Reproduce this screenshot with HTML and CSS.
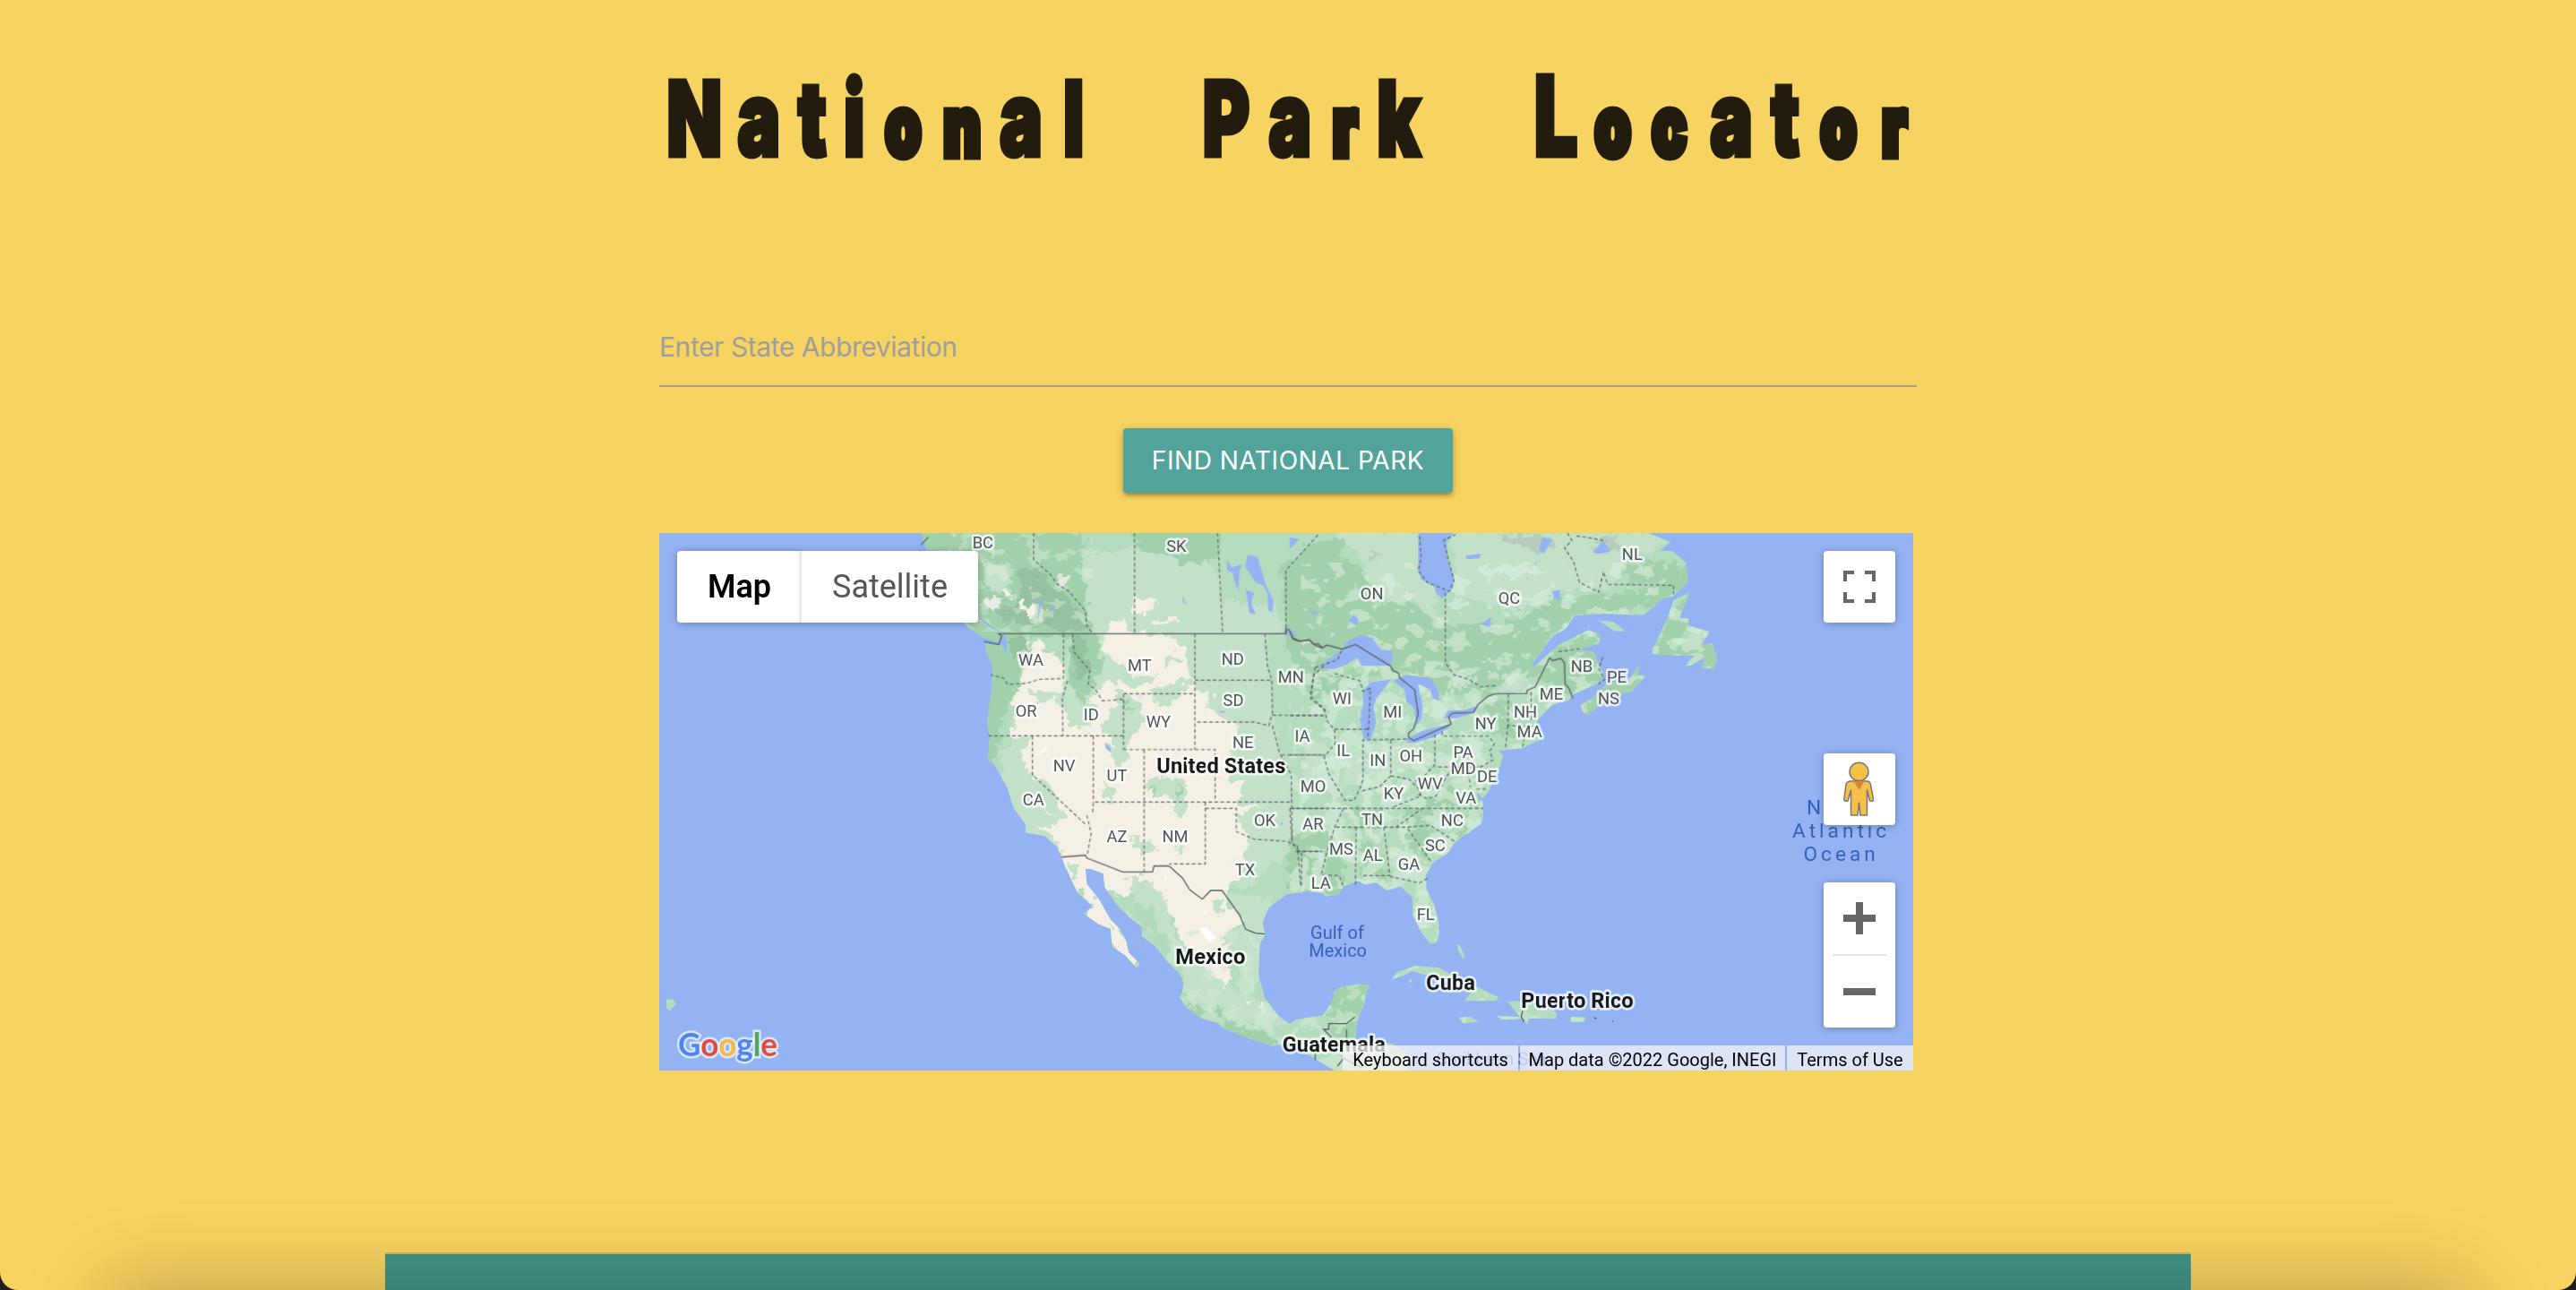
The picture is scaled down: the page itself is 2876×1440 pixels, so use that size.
FILE: index.html
```html
<!DOCTYPE html>
<html lang="en">
<head>
<meta charset="utf-8">
<title>National Park Locator</title>
<link rel="stylesheet" href="styles.css">
</head>
<body>
<main class="page">
  <h1 class="title">
    <svg class="title-art" viewBox="0 0 2005.7 120" preserveAspectRatio="none">
      <text y="114" x="56 159 244 311 389 483 577 661">Nati<tspan class="low">on</tspan>al</text>
      <text y="114" x="904 1006 1094 1179">Pa<tspan class="low">r</tspan>k</text>
      <text y="114" x="1430 1521 1611 1710 1796 1881 1970"><tspan class="tall">L</tspan><tspan class="low">oc</tspan>at<tspan class="low">or</tspan></text>
    </svg>
  </h1>
  <form class="search">
    <input class="state-input" type="text" placeholder="Enter State Abbreviation">
    <button class="find" type="button">FIND NATIONAL PARK</button>
  </form>
  <section class="map">
    <svg class="canvas" viewBox="0 0 4200 1800">
      <defs>
        <filter id="jag" x="-5%" y="-5%" width="110%" height="110%">
          <feTurbulence type="fractalNoise" baseFrequency="0.03" numOctaves="3" seed="4"/>
          <feDisplacementMap in="SourceGraphic" scale="60" xChannelSelector="R" yChannelSelector="G"/>
        </filter>
        <filter id="blotLight" x="0" y="0" width="100%" height="100%">
          <feTurbulence type="fractalNoise" baseFrequency="0.017 0.02" numOctaves="4" seed="11"/>
          <feColorMatrix values="0 0 0 0 .765  0 0 0 0 .882  0 0 0 0 .79  22 0 0 0 -12.6"/>
        </filter>
        <filter id="blotDark" x="0" y="0" width="100%" height="100%">
          <feTurbulence type="fractalNoise" baseFrequency="0.017 0.015" numOctaves="4" seed="23"/>
          <feColorMatrix values="0 0 0 0 .63  0 0 0 0 .82  0 0 0 0 .67  22 0 0 0 -12"/>
        </filter>
        <clipPath id="land">
          <path transform="translate(1032 -15)" d="M-155 15 L-135 71 -40 200 -10 260 40 295 100 340 130 360 135 430 118 392 60 385 65 420 85 460 82 540 65 650 75 690 70 775 90 790 135 870 155 935 195 990 200 1018 260 1030 300 1065 316 1100 330 1140 1250 1140 1250 15Z"/>
          <path transform="translate(1032 -15)" d="M-200 90 L0 330 55 365 105 380 118 355 60 320 -60 200Z"/>
          <path transform="translate(1272 915)" d="M-45 88 L20 100 60 130 76 172 110 250 130 290 180 335 150 360 200 395 240 410 245 470 290 500 328 542 338 528 300 490 290 445 270 410 240 380 200 310 160 260 155 203 215 225 220 270 260 330 300 370 345 405 345 435 390 470 430 520 470 560 485 590 480 620 470 640 495 675 545 710 600 725 620 745 710 780 780 803 830 795 900 830 930 850 1000 890 1240 890 1230 820 1180 795 1060 780 1065 720 1090 660 1095 625 1110 600 1070 595 1010 605 988 620 985 650 950 700 860 715 840 730 800 700 755 640 735 560 740 460 757 430 748 390 770 340 830 295 900 285 950 290 960 302 1005 295 1020 268 1070 250 1090 262 1130 255 1165 283 1210 268 1250 305 1252 365 1282 425 1310 460 1330 458 1340 430 1340 390 1320 320 1298 280 1295 230 1320 190 1370 155 1395 120 1440 85 1480 60 1488 35 1485 -20 -45 -20Z"/>
          <path transform="translate(2112 -15)" d="M-20 15 L1200 15 1275 45 1240 75 1280 75 1328 115 1333 180 1285 225 1250 235 1185 290 1050 285 955 292 925 335 880 360 810 455 820 462 900 390 1000 340 1040 355 1035 385 970 405 1020 415 1040 470 1055 490 1030 520 950 555 935 575 880 590 840 630 825 650 845 690 845 705 780 735 700 745 715 760 700 810 665 880 645 905 625 875 640 930 648 960 600 1020 500 1060 -20 1060Z"/>
          <path transform="translate(2112 -15)" d="M975 590 L1010 570 1060 520 1100 510 1140 500 1170 455 1165 490 1190 495 1145 545 1080 560 995 625 978 610ZM1335 215 L1285 240 1265 300 1215 405 1215 420 1300 425 1355 425 1325 460 1345 458 1390 430 1380 465 1420 470 1432 435 1415 385 1380 390 1405 345 1335 325 1335 300 1305 300 1338 217ZM1035 308 L1085 312 1125 345 1085 343Z"/>
          <path transform="translate(2292 915)" d="M162 580 L180 555 240 535 320 540 380 575 450 605 480 620 520 640 510 652 405 652 425 625 360 590 290 570 230 552 200 567ZM550 655 L580 652 640 662 715 690 712 712 620 710 615 730 595 712 530 715 515 703 590 705ZM385 707 L425 705 452 722 400 727ZM762 705 L813 707 805 722 760 722ZM380 463 L388 465 405 498 402 513 385 485ZM218 588 L225 580 232 590Z"/>
          <path d="M24 1562 L46 1561 57 1578 35 1600 24 1590Z"/>
        </clipPath>
      </defs>
      <rect width="4200" height="1800" fill="#94b3f3"/>
      <g clip-path="url(#land)">
        <rect width="4200" height="1800" fill="#b5dcbe"/>
        <g filter="url(#jag)">
          <g transform="translate(1032 -15)">
            <path fill="#c3e1c9" d="M380 90 L560 60 680 90 820 110 850 240 1040 260 1050 350 1000 360 1010 500 1030 650 1090 900 1100 1060 950 1200 880 1200 0 1200 140 700 410 330Z"/>
            <path fill="#a1d1ab" d="M-220 0 L370 0 400 50 380 150 415 340 440 380 450 470 420 520 340 520 350 360 190 355 170 440 180 520 120 640 90 790 60 780 50 380 -60 250ZM520 0 L840 0 850 90 760 120 600 80ZM1120 60 L1260 20 1260 560 1160 560 1080 440 1060 360ZM1100 1030 L1260 1000 1260 1230 1120 1230Z"/>
            <path fill="#94c19e" d="M160 140 L240 120 270 180 340 230 400 340 290 340 220 330 120 310 60 260 160 260 180 200ZM130 380 L200 370 210 410 160 430ZM340 370 L390 360 410 480 370 500Z"/>
            <path fill="#f5f0e5" d="M205 440 L235 365 260 420 320 430 320 510 340 560 400 590 460 510 500 480 450 390 480 320 520 290 540 350 680 355 740 430 750 500 770 540 830 550 790 600 870 640 910 660 900 720 870 830 940 860 900 920 980 930 900 960 950 1060 890 1110 870 1220 350 1220 300 1040 240 1000 290 990 220 900 150 700 160 560ZM555 225 L640 240 590 290 560 290ZM610 310 L700 305 690 325 620 325Z"/>
            <path fill="#c3e1c9" d="M500 540 L570 570 600 640 540 720 530 780 490 830 480 710 450 660 500 600ZM620 540 L680 520 740 490 750 510 700 570 640 600ZM220 700 L180 760 210 830 260 840 330 960 290 990 240 900 140 850 100 760 150 700ZM600 850 L660 820 690 850 700 810 740 880 720 970 690 950 680 890 620 910ZM450 850 L500 870 470 920ZM540 1030 L630 1060 630 1100 580 1080ZM470 430 L580 500 640 490 560 540 480 510ZM680 410 L720 440 650 460ZM200 540 L300 550 240 590ZM700 1060 L720 1060 710 1090ZM280 560 L340 540 430 600 400 680 340 640Z"/>
            <path fill="#a1d1ab" d="M600 860 L630 880 620 910ZM690 850 L720 880 710 900ZM500 560 L540 580 550 620ZM350 520 L380 500 420 530 380 590Z"/>
            <path fill="#c3e1c9" d="M50 110 L120 130 160 190 110 210 50 190ZM380 95 L400 70 395 140ZM200 250 L270 270 240 320 210 300ZM60 60 L110 80 90 110Z"/>
            <path fill="#e7e5e1" d="M60 235 L120 240 100 275ZM295 165 L340 165 325 200ZM195 370 L215 360 205 410ZM565 540 L585 550 575 580Z"/>
            <path fill="#f5f0e5" d="M170 255 L225 255 215 300ZM120 200 L150 210 140 240Z"/>
          </g>
          <g transform="translate(1272 915)">
            <path fill="#f5f0e5" d="M80 170 L150 165 280 220 430 200 620 220 680 150 690 200 640 270 630 330 720 380 660 400 620 450 640 500 640 610 570 570 540 510 480 460 450 370 400 290 300 230 220 240 300 370 350 430 200 230 150 210 180 290 250 370 340 540 280 510 230 430 150 380 180 330 120 270Z"/>
            <path fill="#c3e1c9" d="M300 240 L360 240 430 320 440 390 470 460 560 540 640 610 740 650 840 720 700 770 480 660 470 580 400 470 320 380ZM580 310 L620 310 620 370 590 360ZM90 190 L130 210 120 240ZM230 390 L250 400 240 410ZM640 300 L780 300 760 480 730 620 640 500 620 450 690 400Z"/>
            <path fill="#b2dbbb" d="M320 320 L370 340 410 420 380 420 320 370ZM350 400 L430 440 480 520 480 590 410 490Z"/>
            <path fill="#a1d1ab" d="M470 620 L500 640 530 690 600 680 640 720 760 760 820 790 760 810 600 750 480 690ZM990 620 L1110 590 1060 780 1050 830 970 740ZM830 210 L900 150 940 190 1000 200 1000 260 840 260Z"/>
            <path fill="#f5f0e5" d="M735 660 L760 665 750 690ZM690 650 L715 650 700 665Z"/>
          </g>
          <g transform="translate(2112 -15)">
            <path fill="#a1d1ab" d="M-40 130 L80 60 180 100 260 170 270 250 400 250 520 330 700 320 880 240 1000 230 1240 200 1350 100 1350 200 1200 270 940 300 860 380 900 400 1040 340 1050 500 930 560 800 480 660 550 520 560 420 480 340 480 250 400 0 380ZM1100 130 L1300 100 1330 200 1140 180ZM660 580 L730 570 760 700 690 690ZM360 970 L500 880 600 840 560 920 440 1000ZM640 900 L660 960 560 1040 600 950ZM0 1020 L120 1040 100 1180 0 1200ZM230 1040 L310 1080 330 1180 240 1180ZM180 480 L330 480 330 500 220 510ZM400 1000 L480 1000 470 1120 380 1060ZM210 940 L330 940 300 1000 220 1000ZM970 620 L1060 510 1200 440 1200 560 1000 640ZM1200 420 L1340 200 1340 330 1280 380 1440 380 1440 480 1300 440Z"/>
            <path fill="#c3e1c9" d="M140 10 L440 10 430 150 500 230 480 320 420 240 330 250 260 170 240 90ZM540 10 L1220 10 1270 50 1140 110 1080 190 1000 200 860 210 780 280 690 260 560 220ZM40 700 L140 720 150 870 60 880ZM160 720 L240 720 240 860 180 870ZM260 720 L420 720 470 790 330 830 260 860ZM130 1000 L210 1000 150 1100ZM340 1080 L430 1110 450 1160 350 1160ZM1260 380 L1360 360 1380 410 1290 410ZM450 580 L600 570 560 610 470 640ZM720 490 L800 480 780 545 700 545Z"/>
            <path fill="#b5cdbd" d="M270 60 L300 80 280 110ZM690 30 L850 15 900 60 820 80ZM1000 60 L1090 20 1100 70 1030 90ZM790 120 L850 110 820 140Z"/>
          </g>
        </g>
        <rect x="2150" y="100" width="1400" height="1230" filter="url(#blotLight)" opacity=".5"/>
        <rect x="2110" y="430" width="700" height="860" filter="url(#blotDark)" opacity=".7"/>
        <rect x="1700" y="1330" width="1400" height="470" filter="url(#blotDark)" opacity=".6"/>
        <rect x="830" y="0" width="620" height="330" filter="url(#blotLight)" opacity=".4"/>
      </g>
      <!-- inland water -->
      <g fill="#94b3f3" transform="translate(2112 -15)">
        <path d="M185 385 L230 357 275 365 305 405 345 410 340 460 240 460 225 432 190 455 150 470 95 468 140 430 180 405ZM245 545 L270 515 340 505 320 530 290 570 280 600 290 650 270 705 248 705 235 640 245 590ZM345 510 L390 490 470 500 500 545 500 575 480 570 470 540 430 520 445 600 440 640 425 660 415 600 390 580 385 540ZM390 705 L450 675 540 655 530 670 480 700 420 718 395 718ZM515 635 L530 610 580 608 625 597 620 615 560 635ZM430 15 L550 15 525 45 530 110 550 160 545 200 510 235 490 215 480 190 440 170 430 130ZM195 310 L215 288 230 305 225 325ZM590 90 L640 85 635 100 592 103ZM845 30 L880 35 850 85 835 70ZM1015 80 L1050 40 1075 75 1040 85ZM880 210 L905 205 905 240 885 235ZM640 320 L675 295 670 330ZM0 30 L30 35 0 70ZM60 275 L100 280 80 290Z"/>
      </g>
      <g fill="#94b3f3" transform="translate(1032 -15)">
        <path d="M940 88 L972 95 1000 190 1025 240 1022 280 1008 275 1005 215 990 190 965 180 930 125ZM870 105 L885 130 920 120 912 140 908 208 895 180 888 148 870 140ZM932 205 L960 215 950 250 965 285 945 285ZM720 225 L735 258 722 245ZM460 715 L480 735 482 750 465 738ZM1065 355 L1075 330 1105 360 1080 358ZM840 612 L870 610 850 618ZM1080 45 L1110 32 1095 52ZM285 255 L293 262 290 295ZM240 240 L250 240 235 315ZM1050 980 L1058 985 1052 998Z"/>
      </g>
      <g fill="#ffffff" transform="translate(1032 -15)"><path d="M228 765 L270 722 262 742ZM803 625 L817 612 812 622ZM658 1150 L670 1175 663 1175ZM790 1290 L800 1275 802 1290ZM775 1340 L800 1335 835 1370 810 1385Z"/><path fill="#e9ebea" d="M52 240 L66 230 75 243 85 235 96 243 115 246 104 256 108 268 92 266 88 278 76 266 60 258Z"/></g>
      <!-- borders -->
      <g class="state-lines">
        <g transform="translate(1032 -15)">
          <path d="M222 15 V105 L275 150 300 185 340 210 395 275 400 325 420 352M560 15 V352M838 15 L855 352M1067 352 V140 L1180 15M322 352 V502 L240 505 200 518 135 522 120 500 78 490M352 352 L358 415 410 475 405 520 430 540 452 577 523 572M335 510 L318 570 320 694M70 694 H523M523 553 V740M523 553 H762M762 352 V740M523 740 H830 V916M218 694 V825 L395 990M422 694 V916M400 960 L415 1020 402 1090M420 950 L422 916 H1085M592 740 V1150M797 916 V1123 H676M797 937 H901 V1015 L960 1040 1070 1047 1100 1060M762 508 H1015M997 352 L1005 460 1020 510 1022 625M770 648 H960 L1010 660 1020 625 1200 626M1022 660 L1045 750 1085 825 1088 1045M1052 758 H1200M1085 937 H1200M1100 1081 H1190M1105 1060 L1117 1200M1195 460 L1160 490 1150 570 1200 610"/>
        </g>
        <g transform="translate(2112 -15)">
          <path d="M435 25 L440 100 430 140 460 180 535 210 550 175 530 100 515 40 555 20M521 215 V450 L550 490 600 505 640 530 695 525M930 15 L945 40 920 65 950 110 970 180 1035 213 1050 145 1065 187 1285 190 V220M960 25 L1000 30 1060 42M900 412 L970 403M1048 430 L1035 470 1055 505 1035 520M85 465 L68 560 115 605 125 645 150 675 152 720 115 765 130 820 160 870 185 910 215 910 235 870 245 840 V708 L395 705M85 465 L160 440 175 405M150 485 L235 510 245 545 270 535 262 700M0 626 H118M150 672 H262M0 758 H115M338 708 V828 L300 865 235 880M338 828 L400 840 430 870 440 895 340 935M486 690 V790 L440 840 420 845M510 680 V695 H665 L685 720 670 745 680 775 640 798 H486M430 890 L460 905 490 895 525 830 550 800M0 937 H648M0 937 L8 1055 40 1090 38 1200M155 1000 H400 L470 993 555 1050M180 937 L150 1000 125 1080 105 1160 165 1162 180 1200M222 1000 L220 1200M315 1000 L335 1162 H245M335 1165 L435 1187 460 1172M395 1005 L475 1118M355 1000 L440 940M732 555 L730 660 820 662M808 548 V640M730 660 L722 740M785 700 L780 735M625 872 H665M25 1081 H105M595 800 L605 865"/>
        </g>
      </g>
      <g class="country-lines">
        <path transform="translate(1032 -15)" d="M-155 55 L-130 28M55 378 L105 388 115 360 105 352 H1067 V335 L1078 340 1090 365 1115 377 1145 372 1160 388 1175 385 1190 400M316 1100 L395 1094 400 1103 520 1150 H620 L625 1130 H676"/>
        <path transform="translate(2112 -15)" d="M0 345 L10 370 30 377 65 373 85 390 108 400 125 390 175 404 220 388 337 460 345 475 365 485 368 500 418 540 430 620 415 670 398 685 398 700 415 710 540 655 532 630 545 618 615 616 630 590 665 560 690 553 793 552 795 542 822 530 870 433 880 442 908 435 920 450 922 520 935 535 948 568"/>
        <path transform="translate(1272 915)" d="M436 200 L480 240 505 280 547 311 575 282 H613 L672 365 692 412 725 425 757 428M1058 706 L1030 728 H970 V747 H953 L980 775M1030 748 V780M925 825 V850M1000 870 L1020 845 1080 875"/>
        <path transform="translate(2292 915)" d="M600 685 L595 705 605 722M840 707 L847 712M900 719 h4"/>
      </g>
      <g class="states">
        <text x="1084" y="50">BC</text><text x="1732" y="63">SK</text>
        <text x="1245" y="445">WA</text><text x="1609" y="463">MT</text><text x="1921" y="440">ND</text><text x="2116" y="500">MN</text>
        <text x="1229" y="616">OR</text><text x="1447" y="627">ID</text><text x="1672" y="652">WY</text><text x="1923" y="580">SD</text>
        <text x="1955" y="721">NE</text><text x="2154" y="700">IA</text><text x="1356" y="799">NV</text><text x="1533" y="830">UT</text>
        <text x="1253" y="911">CA</text><text x="1533" y="1034">AZ</text><text x="1728" y="1034">NM</text><text x="2028" y="981">OK</text><text x="1962" y="1147">TX</text>
        <text x="2387" y="223">ON</text><text x="2847" y="236">QC</text><text x="3259" y="89">NL</text><text x="3090" y="464">NB</text>
        <text x="3207" y="500">PE</text><text x="3180" y="573">NS</text><text x="2988" y="557">ME</text><text x="2287" y="572">WI</text><text x="2456" y="617">MI</text>
        <text x="2901" y="617">NH</text><text x="2768" y="656">NY</text><text x="2915" y="684">MA</text><text x="2291" y="746">IL</text><text x="2407" y="781">IN</text>
        <text x="2518" y="764">OH</text><text x="2693" y="752">PA</text><text x="2693" y="807">MD</text><text x="2773" y="834">DE</text><text x="2582" y="857">WV</text>
        <text x="2190" y="866">MO</text><text x="2460" y="890">KY</text><text x="2702" y="905">VA</text><text x="2388" y="978">TN</text><text x="2656" y="980">NC</text>
        <text x="2190" y="993">AR</text><text x="2284" y="1077">MS</text><text x="2390" y="1098">AL</text><text x="2599" y="1065">SC</text><text x="2511" y="1128">GA</text>
        <text x="2216" y="1192">LA</text><text x="2567" y="1295">FL</text>
      </g>
      <g class="countries">
        <text x="1882" y="804" textLength="432">United States</text><text x="1846" y="1444" textLength="234">Mexico</text>
        <text x="2651" y="1531" textLength="164">Cuba</text><text x="3075" y="1591" textLength="376">Puerto Rico</text><text x="2260" y="1738" textLength="346">Guatemala</text>
      </g>
      <g class="seas">
        <text x="2271" y="1360">Gulf of</text><text x="2273" y="1418">Mexico</text><text x="2787" y="1782" textLength="370">Caribbean Sea</text>
        <g class="ocean"><text x="3959" y="942">North</text><text x="3959" y="1020">Atlantic</text><text x="3959" y="1098">Ocean</text></g>
      </g>
    </svg>
    <div class="map-types"><span class="type active">Map</span><span class="type">Satellite</span></div>
    <div class="controls">
      <div class="control"><svg width="36" height="36" viewBox="0 0 18 18"><path fill="#666" d="M0 0v6h2V2h4V0zM12 0v2h4v4h2V0zM0 12v6h6v-2H2v-4zM16 12v4h-4v2h6v-6z"/></svg></div>
      <div class="control pegman"><svg width="36" height="62" viewBox="0 0 36 62"><g fill="#f5bf49" stroke="#777" stroke-width="1.5" stroke-linejoin="round"><path d="M8 22 Q4 22 3 26 L.8 42 Q1 45 5 44 L8.5 32 V60 H16 L17.5 46 L19 60 H26.500 V32 L29.500 44 Q34 45 33.500 42 L30.500 26 Q30 22 26 22Z"/><ellipse cx="17.500" cy="11.500" rx="10.500" ry="10.300"/></g><path fill="#d48640" d="M11.500 22 H23.500 L17.500 32Z"/></svg></div>
      <div class="control zoom">
        <svg width="36" height="36" viewBox="0 0 18 18"><path fill="#666" d="M7 0h4v7h7v4h-7v7H7v-7H0V7h7z"/></svg>
        <i class="rule"></i>
        <svg width="36" height="36" viewBox="0 0 18 18"><path fill="#666" d="M0 7h18v4H0z"/></svg>
      </div>
    </div>
    <svg class="logo" width="130" height="56"><text x="3" y="39" textLength="111" lengthAdjust="spacingAndGlyphs"><tspan fill="#4f86ec">G</tspan><tspan fill="#d9503f">o</tspan><tspan fill="#f2bd42">o</tspan><tspan fill="#4f86ec">g</tspan><tspan fill="#58a55c">l</tspan><tspan fill="#d9503f">e</tspan></text></svg>
    <div class="legal"><span class="keys">Keyboard shortcuts</span><span class="data">Map data ©2022 Google, INEGI</span><span class="terms">Terms of Use</span></div>
  </section>
  <footer class="footer"></footer>
  <div class="dock-shade"></div>
</main>
</body>
</html>
```
FILE: styles.css
```css
* { box-sizing: border-box; }
body { margin: 0; background: #1e1e1e; }
.page {
  position: relative;
  display: flex;
  flex-direction: column;
  align-items: center;
  height: 1440px;
  overflow: hidden;
  background: #f7d361;
  border-radius: 0 0 20px 20px;
  font-family: Inter, "Liberation Sans", sans-serif;
}
.title { margin: 60px 0 0; width: 1404px; height: 120px; }
.title-art { display: block; width: 1404px; height: 120px; overflow: visible; }
.title-art text {
  font: 900 115px Inter, "Liberation Sans", sans-serif;
  fill: #211c0e;
  stroke: #211c0e;
  stroke-width: 5px;
  text-anchor: middle;
}
.title-art .low { font-size: 92px; stroke-width: 9px; }
.title-art .tall { font-size: 124px; }
.search {
  display: flex;
  flex-direction: column;
  align-items: center;
  width: 1404px;
  margin-top: 164px;
}
.state-input {
  width: 100%;
  height: 88px;
  padding: 0;
  border: 0;
  border-bottom: 2px solid #9e9e9e;
  background: none;
  font: 400 30px Inter, "Liberation Sans", sans-serif;
  letter-spacing: -0.43px;
}
.state-input::placeholder { color: #9e9e9e; opacity: 1; }
.find {
  width: 368px;
  height: 72px;
  margin-top: 46px;
  padding: 0;
  border: 0;
  border-radius: 4px;
  background: #52a49a;
  color: #fff;
  font: 400 28px Inter, "Liberation Sans", sans-serif;
  letter-spacing: 0.55px;
  white-space: nowrap;
  box-shadow: 0 4px 4px rgba(0,0,0,.14), 0 6px 2px -4px rgba(0,0,0,.12), 0 2px 10px rgba(0,0,0,.2);
}
.map {
  position: relative;
  width: 1400px;
  height: 600px;
  margin: 45px 4px 0 0;
  overflow: hidden;
  font-family: Roboto, Arial, sans-serif;
}
.canvas { display: block; width: 1400px; height: 600px; }
.state-lines path { fill: none; stroke: #5b6166; stroke-width: 3.500; stroke-dasharray: 12 8; }
.country-lines path { fill: none; stroke: #5b6166; stroke-width: 4; }
.canvas text { text-anchor: middle; font-family: Roboto, Arial, sans-serif; }
.states text, .countries text { paint-order: stroke; stroke: rgba(255,255,255,.72); stroke-linejoin: round; }
.states text { font-size: 55px; fill: #505458; stroke-width: 16px; }
.countries text { font-size: 71px; font-weight: 700; fill: #181a1c; stroke-width: 16px; }
.seas text { font-size: 60px; fill: #3560be; }
.seas .ocean text { font-size: 68px; letter-spacing: 12px; }
.map-types {
  position: absolute;
  left: 20px;
  top: 20px;
  display: flex;
  height: 80px;
  background: #fff;
  border-radius: 4px;
  box-shadow: 0 1px 8px rgba(0,0,0,.3);
}
.type { width: 197px; line-height: 80px; text-align: center; font-size: 36px; color: #565656; }
.type.active { width: 139px; color: #000; font-weight: 600; box-shadow: inset -5px 0 5px -4px rgba(0,0,0,.2); }
.controls {
  position: absolute;
  top: 20px;
  right: 20px;
  display: flex;
  flex-direction: column;
}
.control {
  display: flex;
  align-items: center;
  justify-content: center;
  width: 80px;
  height: 80px;
  border-radius: 4px;
  background: #fff;
  box-shadow: 0 1px 8px rgba(0,0,0,.3);
}
.pegman { margin-top: 146px; }
.zoom { flex-direction: column; gap: 22px; height: 162px; margin-top: 64px; }
.rule { width: 60px; height: 2px; background: #e6e6e6; }
.logo { position: absolute; left: 18px; bottom: -1px; overflow: visible; }
.logo text {
  font: 700 37px Lato, "Liberation Sans", sans-serif;
  paint-order: stroke;
  stroke: rgba(255,255,255,.65);
  stroke-width: 5px;
}
.legal {
  position: absolute;
  right: 0;
  bottom: 0;
  display: flex;
  height: 28px;
  gap: 2px;
  line-height: 32px;
  font-size: 20px;
  color: #000;
  text-align: center;
  white-space: nowrap;
}
.legal span { background: rgba(245,245,245,.74); }
.keys { width: 196px; }
.data { width: 296px; }
.terms { width: 141px; }
.footer {
  width: 2016px;
  height: 42px;
  margin-top: 203px;
  border-top: 2px solid #d4b04d;
  background: #439589;
}
.dock-shade {
  position: absolute;
  left: 120px;
  right: 120px;
  top: 1440px;
  height: 200px;
  box-shadow: 0 0 95px rgba(0,0,0,.26);
}
```
